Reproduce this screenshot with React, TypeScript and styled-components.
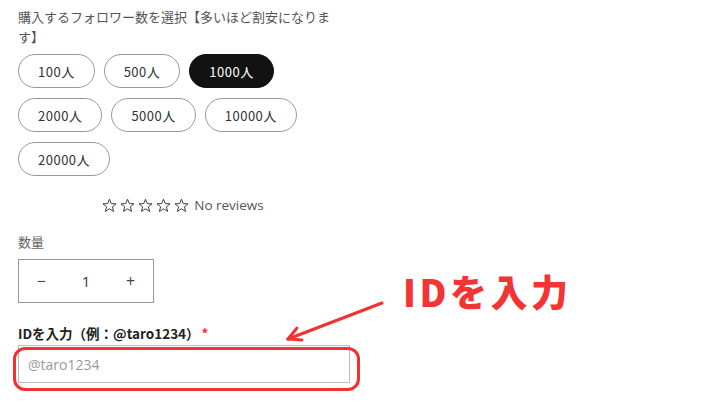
import React from "react";
import styled, { createGlobalStyle } from "styled-components";

const Global = createGlobalStyle`
  html, body { margin: 0; padding: 0; background: #fff; }
  body { font-family: "Noto Sans CJK JP", "Noto Sans", sans-serif; }
  * { box-sizing: border-box; }
`;

const Page = styled.div`
  position: relative;
  width: 720px;
  height: 405px;
  overflow: hidden;
  background: #fff;
`;

const Column = styled.div`
  width: 350px;
  padding: 7px 0 0 18px;
  display: flex;
  flex-direction: column;
`;

const Title = styled.div`
  width: 322px;
  font-size: 13px;
  line-height: 20px;
  color: #555;
`;

const PillGrid = styled.div`
  margin-top: 7px;
  display: flex;
  flex-wrap: wrap;
  column-gap: 9px;
  row-gap: 10px;
  width: 300px;
`;

const Pill = styled.div<{ $active?: boolean }>`
  height: 34px;
  padding: 0 19px;
  border-radius: 20px;
  border: 1px solid ${(p) => (p.$active ? "#121212" : "#999")};
  background: ${(p) => (p.$active ? "#121212" : "#fff")};
  color: ${(p) => (p.$active ? "#fff" : "#333")};
  font-size: 13px;
  letter-spacing: 0.5px;
  display: flex;
  align-items: center;
  justify-content: center;
`;

const Reviews = styled.div`
  margin-top: 20px;
  height: 18px;
  display: flex;
  align-items: center;
  justify-content: center;
  gap: 4px;
  width: 330px;
`;

const Stars = styled.div`
  display: flex;
  gap: 3px;
  margin-right: 1px;
`;

const ReviewText = styled.span`
  font-family: "Open Sans", "Noto Sans", sans-serif;
  font-size: 13.5px;
  color: #555;
`;

const Label = styled.div`
  margin-top: 19px;
  font-size: 13px;
  line-height: 18px;
  color: #666;
`;

const Qty = styled.div`
  margin-top: 8px;
  width: 136px;
  height: 44px;
  border: 1px solid #999;
  display: grid;
  grid-template-columns: 1fr 1fr 1fr;
  align-items: center;
  justify-items: center;
  font-family: "Open Sans", sans-serif;
  font-size: 15px;
  color: #333;
`;

const QtySign = styled.span`
  font-size: 16px;
  color: #444;
`;

const FieldLabel = styled.div`
  margin-top: 21px;
  font-size: 13.5px;
  line-height: 18px;
  font-weight: 700;
  color: #222;
  display: flex;
  gap: 2px;
`;

const Req = styled.span`
  color: #e33;
`;

const Input = styled.div`
  margin-top: 3px;
  width: 332px;
  height: 38px;
  border: 1px solid #bbb;
  padding-left: 9px;
  display: flex;
  align-items: center;
  font-family: "Open Sans", sans-serif;
  font-size: 14px;
  color: #999;
`;

const Highlight = styled.div`
  position: absolute;
  left: 13px;
  top: 347px;
  width: 347px;
  height: 44px;
  border: 3px solid #f03232;
  border-radius: 12px;
`;

const Callout = styled.div`
  position: absolute;
  left: 403px;
  top: 266px;
  font-family: "Noto Sans CJK JP", sans-serif;
  font-weight: 900;
  font-size: 37px;
  line-height: 50px;
  letter-spacing: 3.5px;
  color: #f23434;
`;

const ArrowSvg = styled.svg`
  position: absolute;
  left: 280px;
  top: 295px;
`;

const Star = () => (
  <svg width="15" height="15" viewBox="0 0 24 24" fill="none" stroke="#333" strokeWidth="1.5" strokeLinejoin="miter">
    <polygon points="12,2 14.9,9 22.5,9.3 16.6,14.1 18.6,21.5 12,17.3 5.4,21.5 7.4,14.1 1.5,9.3 9.1,9" />
  </svg>
);

const options = ["100人", "500人", "1000人", "2000人", "5000人", "10000人", "20000人"];

export default function App() {
  return (
    <Page>
      <Global />
      <Column>
        <Title>購入するフォロワー数を選択【多いほど割安になります】</Title>
        <PillGrid>
          {options.map((o) => (
            <Pill key={o} $active={o === "1000人"}>
              {o}
            </Pill>
          ))}
        </PillGrid>
        <Reviews>
          <Stars>
            <Star />
            <Star />
            <Star />
            <Star />
            <Star />
          </Stars>
          <ReviewText>No reviews</ReviewText>
        </Reviews>
        <Label>数量</Label>
        <Qty>
          <QtySign>−</QtySign>
          <span>1</span>
          <QtySign>+</QtySign>
        </Qty>
        <FieldLabel>
          <span>IDを入力（例：@taro1234）</span>
          <Req>*</Req>
        </FieldLabel>
        <Input>@taro1234</Input>
      </Column>
      <Highlight />
      <ArrowSvg width="110" height="55" viewBox="0 0 110 55">
        <g stroke="#f03232" strokeWidth="3" strokeLinecap="round" fill="none">
          <line x1="102" y1="8" x2="8" y2="44" />
          <line x1="8" y1="44" x2="17" y2="33" />
          <line x1="8" y1="44" x2="22" y2="45" />
        </g>
      </ArrowSvg>
      <Callout>IDを入力</Callout>
    </Page>
  );
}
